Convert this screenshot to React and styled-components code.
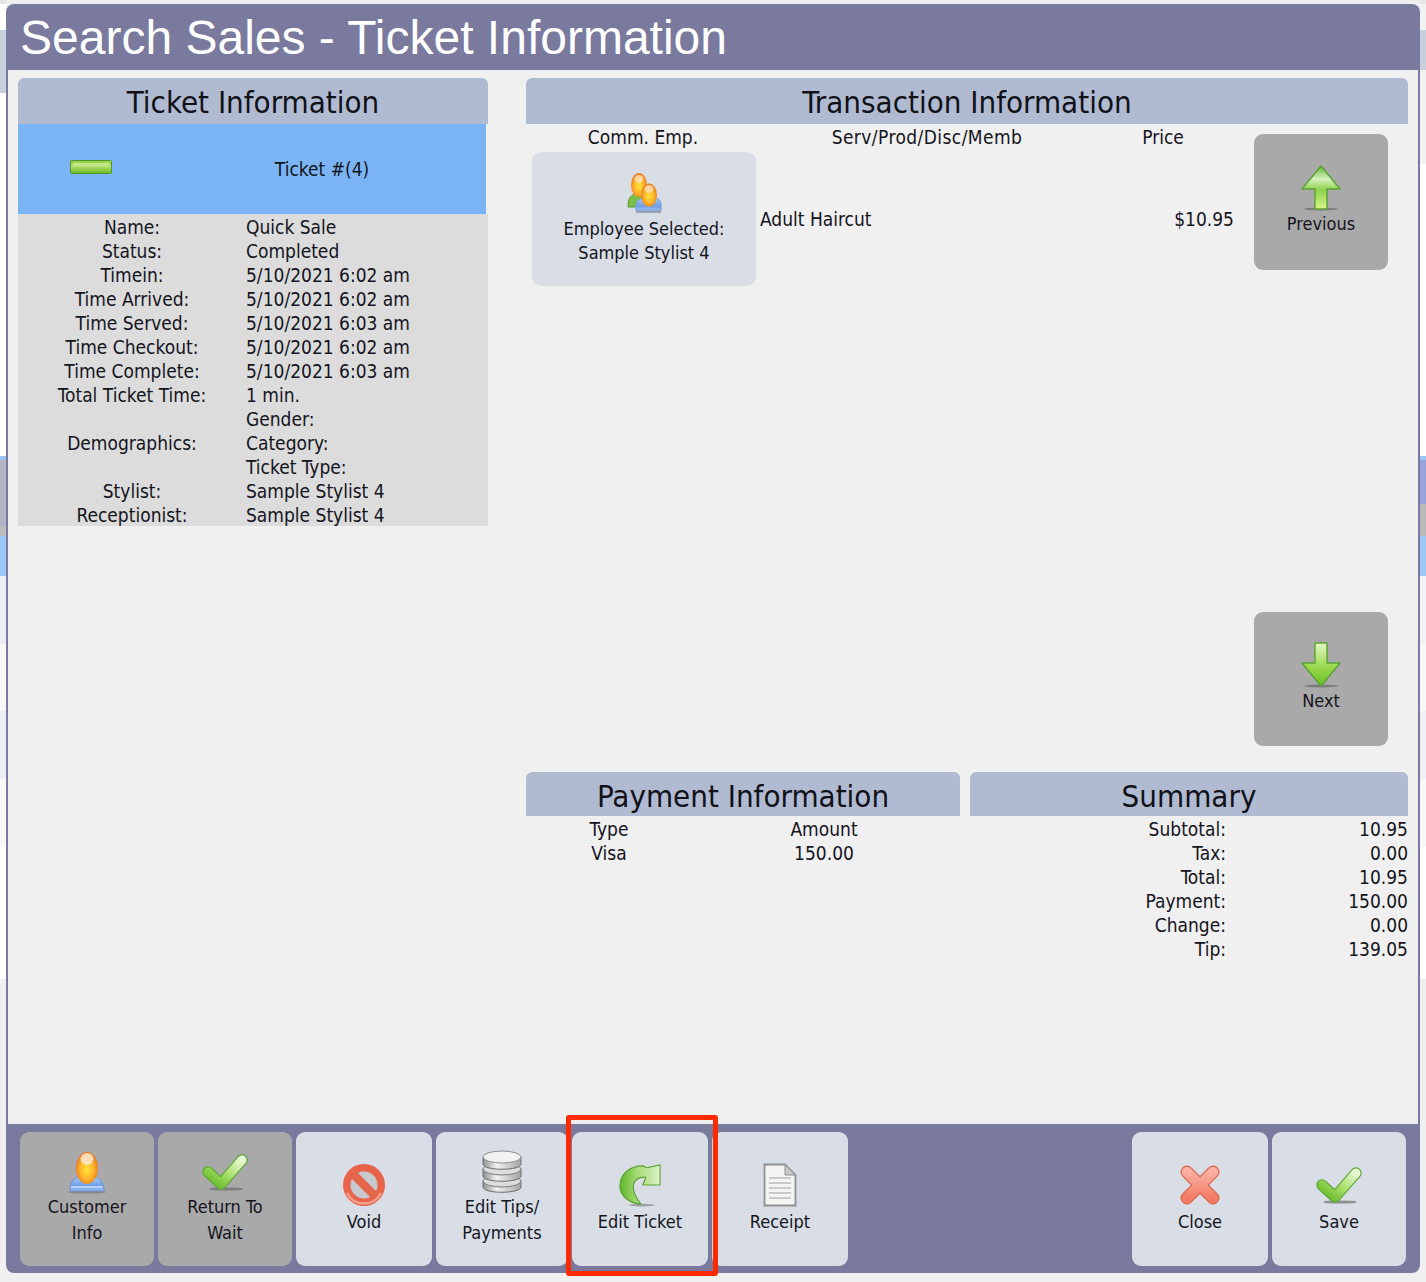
import React from 'react';
import styled, { createGlobalStyle } from 'styled-components';

const GlobalStyle = createGlobalStyle`
  html, body {
    margin: 0;
    padding: 0;
    background: #f0f0f0;
  }
  body {
    font-family: "DejaVu Sans Condensed", "DejaVu Sans", sans-serif;
    color: #14141c;
  }
`;

const Page = styled.div`
  display: grid;
  grid-template-columns: 6px 1414px 6px;
  width: 1426px;
  height: 1282px;
  overflow: hidden;
`;

const Gutter = styled.div`
  display: flex;
  flex-direction: column;
`;

const Stripe = styled.div`
  height: ${(p) => p.$h}px;
  background: ${(p) => p.$c};
`;

const Modal = styled.div`
  display: flex;
  flex-direction: column;
  height: 1269px;
  margin-top: 4px;
  background: #f0f0f0;
`;

const TitleBar = styled.div`
  height: 66px;
  flex: none;
  background: #7a7a9e;
  border-radius: 8px 8px 0 0;
  color: #fff;
  font-family: "Liberation Sans", Arial, sans-serif;
  font-size: 48px;
  line-height: 68px;
  padding-left: 14px;
  white-space: nowrap;
`;

const Body = styled.div`
  flex: 1;
  display: grid;
  grid-template-columns: 470px 882px;
  column-gap: 38px;
  padding: 8px 12px 0 10px;
  border-left: 2px solid #7a7a9e;
  border-right: 2px solid #7a7a9e;
  min-height: 0;
`;

const Column = styled.div`
  display: flex;
  flex-direction: column;
`;

const SectionHead = styled.div`
  height: ${(p) => p.$h || 46}px;
  flex: none;
  background: #b0bbd2;
  border-radius: 6px 6px 0 0;
  text-align: center;
  font-size: 31px;
  line-height: ${(p) => (p.$h ? p.$h + 4 : 48)}px;
  color: #111118;
  white-space: nowrap;
`;

const TicketBanner = styled.div`
  display: grid;
  grid-template-columns: 146px 1fr;
  align-items: center;
  justify-items: center;
  height: 90px;
  margin-right: 2px;
  padding-right: 6px;
  background: #7ab4f5;
  font-size: 19px;
`;

const TicketRows = styled.div`
  display: grid;
  grid-template-columns: 228px 1fr;
  grid-auto-rows: 24px;
  background: #dcdcdc;
  font-size: 19px;
  line-height: 26px;
`;

const RowLabel = styled.div`
  text-align: center;
  white-space: nowrap;
`;

const RowValue = styled.div`
  white-space: nowrap;
`;

const Transaction = styled.div`
  display: flex;
  height: 648px;
  flex: none;
  padding-right: 20px;
`;

const TransactionList = styled.div`
  width: 708px;
  flex: none;
`;

const ListHead = styled.div`
  display: grid;
  grid-template-columns: 234px 334px 138px;
  height: 25px;
  font-size: 19px;
  line-height: 26px;
  text-align: center;
`;

const WideHeadText = styled.span`
  letter-spacing: 0.42px;
`;

const ListItem = styled.div`
  display: grid;
  grid-template-columns: 234px 1fr auto;
  align-items: center;
  margin-top: 3px;
  font-size: 19px;
`;

const NavColumn = styled.div`
  display: flex;
  flex-direction: column;
  justify-content: space-between;
  margin-left: 20px;
  padding: 10px 0 26px;
`;

const TileButton = styled.button`
  display: flex;
  flex-direction: column;
  align-items: center;
  justify-content: center;
  gap: ${(p) => (p.$single ? 2 : 0)}px;
  box-sizing: border-box;
  flex: none;
  width: ${(p) => p.$w || 134}px;
  height: ${(p) => p.$hgt || 134}px;
  margin-left: ${(p) => (p.$push ? 'auto' : '0')};
  padding: ${(p) => (p.$single ? '0' : '0 0 2px')};
  border: none;
  border-radius: 9px;
  background: ${(p) => (p.$dim ? '#a9a9a9' : '#d9dee6')};
  color: #14141c;
  font-family: inherit;
  font-size: 18px;
  line-height: ${(p) => p.$lh || 26}px;
  white-space: nowrap;
`;

const EmployeeButton = styled(TileButton)`
  margin-left: 6px;
`;

const IconGap = styled.span`
  display: block;
  height: 3px;
`;

const Bottom = styled.div`
  display: grid;
  grid-template-columns: 434px 438px;
  column-gap: 10px;
`;

const PayRows = styled.div`
  display: grid;
  grid-template-columns: 166px 264px;
  grid-auto-rows: 24px;
  font-size: 19px;
  line-height: 26px;
  text-align: center;
`;

const SummaryRows = styled.div`
  display: grid;
  grid-template-columns: 256px 1fr;
  grid-auto-rows: 24px;
  font-size: 19px;
  line-height: 26px;
  text-align: right;
`;

const BottomBar = styled.div`
  position: relative;
  display: flex;
  gap: 4px;
  flex: none;
  height: 149px;
  box-sizing: border-box;
  padding: 8px 14px 0;
  background: #7a7a9e;
  border-radius: 0 0 8px 8px;
`;

const Highlight = styled.div`
  position: absolute;
  left: 560px;
  top: -9px;
  width: 152px;
  height: 161px;
  box-sizing: border-box;
  border: 5px solid #ff2a00;
  border-radius: 3px;
  pointer-events: none;
`;

const Glyph = styled.svg`
  display: block;
  flex: none;
`;

const Defs = () => (
  <svg width="0" height="0" style={{ position: 'absolute' }}>
    <defs>
      <linearGradient id="grnV" x1="0" y1="0" x2="0" y2="1">
        <stop offset="0" stopColor="#e4f6c8" />
        <stop offset="0.55" stopColor="#9ada50" />
        <stop offset="1" stopColor="#6cbd24" />
      </linearGradient>
      <linearGradient id="grnCheck" x1="1" y1="0" x2="0" y2="1">
        <stop offset="0" stopColor="#e8f8d4" />
        <stop offset="0.5" stopColor="#a8e06c" />
        <stop offset="1" stopColor="#62b620" />
      </linearGradient>
      <linearGradient id="grnUp" x1="0" y1="0" x2="0" y2="1">
        <stop offset="0" stopColor="#5fb52c" />
        <stop offset="0.3" stopColor="#d8f2c0" />
        <stop offset="0.55" stopColor="#8ed24c" />
        <stop offset="1" stopColor="#d8f48c" />
      </linearGradient>
      <linearGradient id="bar" x1="0" y1="0" x2="0" y2="1">
        <stop offset="0" stopColor="#8fce3c" />
        <stop offset="0.45" stopColor="#b6e070" />
        <stop offset="1" stopColor="#6ab41e" />
      </linearGradient>
      <radialGradient id="head" cx="0.5" cy="0.55" r="0.55">
        <stop offset="0" stopColor="#ffe23a" />
        <stop offset="0.55" stopColor="#ffb52a" />
        <stop offset="1" stopColor="#e8761e" />
      </radialGradient>
      <linearGradient id="shirt" x1="0" y1="0" x2="0" y2="1">
        <stop offset="0" stopColor="#aac8f4" />
        <stop offset="0.6" stopColor="#6f9fe8" />
        <stop offset="1" stopColor="#98bcf0" />
      </linearGradient>
      <linearGradient id="disc" x1="0" y1="0" x2="1" y2="0">
        <stop offset="0" stopColor="#8e8e8e" />
        <stop offset="0.35" stopColor="#f2f2f2" />
        <stop offset="1" stopColor="#a4a4a4" />
      </linearGradient>
      <linearGradient id="salmon" x1="0" y1="0" x2="0" y2="1">
        <stop offset="0" stopColor="#fbb0a0" />
        <stop offset="1" stopColor="#f47c66" />
      </linearGradient>
      <linearGradient id="redo" x1="0" y1="0" x2="1" y2="0">
        <stop offset="0" stopColor="#5fb42a" />
        <stop offset="0.45" stopColor="#a8dc78" />
        <stop offset="1" stopColor="#dcf2c8" />
      </linearGradient>
    </defs>
  </svg>
);

const StatusBar = () => (
  <Glyph width="42" height="14" viewBox="0 0 42 14" style={{ transform: 'translateY(-2px)' }}>
    <rect x="0.5" y="0.5" width="41" height="13" rx="1" fill="url(#bar)" stroke="#4f9a2c" />
    <rect x="3" y="3" width="36" height="3" fill="#c2e88a" />
  </Glyph>
);

const PeopleIcon = () => (
  <Glyph width="36" height="42" viewBox="0 0 36 42">
    <path d="M2 33 q0 -10 8 -11 h8 l4 4 v9 h-20z" fill="#7cc04a" stroke="#5c9c3c" />
    <ellipse cx="13" cy="13" rx="8" ry="12" fill="url(#head)" />
    <ellipse cx="13" cy="7" rx="4.5" ry="4" fill="#ffe3c0" opacity="0.75" />
    <path d="M10 39 v-7 q1 -5 8 -6 h11 q6 1 6 6 v7z" fill="url(#shirt)" stroke="#7c9ad0" />
    <rect x="10" y="39" width="25" height="2" fill="#8a8f9a" opacity="0.7" />
    <ellipse cx="23" cy="23" rx="8" ry="11.5" fill="url(#head)" />
    <ellipse cx="23" cy="17" rx="4.5" ry="4" fill="#ffe3c0" opacity="0.75" />
  </Glyph>
);

const PersonIcon = () => (
  <Glyph width="48" height="44" viewBox="0 0 48 44">
    <ellipse cx="24" cy="42" rx="19" ry="1.6" fill="#777" opacity="0.7" />
    <path d="M7 41 q0 -13 10 -14 h14 q10 1 10 14z" fill="url(#shirt)" stroke="#6f94d4" />
    <path d="M8 37 h32" stroke="#cfe0fa" strokeWidth="1.5" />
    <ellipse cx="24" cy="18" rx="11" ry="16" fill="url(#head)" />
    <ellipse cx="24" cy="9" rx="6.5" ry="6" fill="#ffe9d0" opacity="0.85" />
  </Glyph>
);

const CheckIcon = () => (
  <Glyph width="48" height="44" viewBox="0 -2 48 44">
    <ellipse cx="25" cy="37" rx="17" ry="1.6" fill="#666" opacity="0.65" />
    <path d="M7 20 L20 32 L41 8" fill="none" stroke="#5fa93a" strokeWidth="11.5" strokeLinejoin="round" strokeLinecap="round" />
    <path d="M7 20 L20 32 L41 8" fill="none" stroke="url(#grnCheck)" strokeWidth="9" strokeLinejoin="round" strokeLinecap="round" />
  </Glyph>
);

const VoidIcon = () => (
  <Glyph width="44" height="44" viewBox="0 0 44 44">
    <circle cx="22" cy="22" r="21" fill="#e8634a" />
    <circle cx="22" cy="22" r="13.5" fill="#c6c9ce" />
    <path d="M11 11 L33 33" stroke="#e2654c" strokeWidth="8.5" />
    <path d="M5 30 A19 19 0 0 0 39 30" fill="none" stroke="#f4a08c" strokeWidth="2.5" />
  </Glyph>
);

const DatabaseIcon = () => (
  <Glyph width="40" height="44" viewBox="0 0 40 44">
    <path d="M1 31 v6 c0 7 38 7 38 0 v-6z" fill="url(#disc)" stroke="#6e6e6e" />
    <ellipse cx="20" cy="31" rx="19" ry="6" fill="#dcdcdc" stroke="#7c7c7c" />
    <path d="M1 19 v7 c0 7 38 7 38 0 v-7z" fill="url(#disc)" stroke="#6e6e6e" />
    <ellipse cx="20" cy="19" rx="19" ry="6" fill="#dcdcdc" stroke="#7c7c7c" />
    <path d="M1 7 v7 c0 7 38 7 38 0 v-7z" fill="url(#disc)" stroke="#6e6e6e" />
    <ellipse cx="20" cy="7" rx="19" ry="6" fill="#f2f2f2" stroke="#8c8c8c" />
  </Glyph>
);

const RedoIcon = () => (
  <Glyph width="48" height="44" viewBox="0 0 48 46">
    <ellipse cx="26" cy="44" rx="14" ry="1.4" fill="#777" opacity="0.6" />
    <path
      d="M25 43 C12 42 3 34 3 24 C3 11 14 3 27 3 L31 5 L45 2 L45 23 L27 23 L30 15 C23 14 17 18 17 25 C17 32 21 38 25 43z"
      fill="url(#redo)"
      stroke="#5aa232"
      strokeWidth="1.2"
      strokeLinejoin="round"
    />
  </Glyph>
);

const DocIcon = () => (
  <Glyph width="34" height="44" viewBox="0 0 34 44">
    <path d="M1.5 1.5 H22 L32.5 12 V42.5 H1.5z" fill="#f4f4f4" stroke="#8f8f8f" strokeWidth="1.8" />
    <path d="M22 1.5 V12 H32.5z" fill="#c8c8c8" stroke="#8f8f8f" />
    <path d="M6 15 H28 M6 20 H28 M6 25 H28 M6 30 H28 M6 35 H28" stroke="#bcbcbc" strokeWidth="1.5" />
  </Glyph>
);

const CloseIcon = () => (
  <Glyph width="44" height="44" viewBox="-1 -1 44 44">
    <path d="M8 8 L34 34 M34 8 L8 34" stroke="#d9654f" strokeWidth="13" strokeLinecap="round" />
    <path d="M8 8 L34 34 M34 8 L8 34" stroke="url(#salmon)" strokeWidth="10.5" strokeLinecap="round" />
  </Glyph>
);

const ArrowIcon = ({ down }) => (
  <Glyph width="42" height="46" viewBox="0 0 42 46">
    <ellipse cx="21" cy="44" rx="17" ry="1.5" fill="#666" opacity="0.65" />
    <path
      d={down
        ? 'M15 1 H27 V21 H40 L21 44 L2 21 H15z'
        : 'M21 1 L40 24 H27 V44 H15 V24 H2z'}
      fill={down ? 'url(#grnV)' : 'url(#grnUp)'}
      stroke="#5aa232"
      strokeWidth="1.4"
      strokeLinejoin="round"
    />
  </Glyph>
);

const leftStripes = [
  [4, '#e6e6e6'], [26, '#ffffff'], [63, '#c8d0de'], [363, '#ffffff'], [4, '#9ac4f4'],
  [66, '#b4b4c4'], [10, '#bdbdbd'], [40, '#9cc6f6'], [68, '#eeeef5'], [67, '#f8f8f8'],
  [68, '#eeeef5'], [68, '#f8f8f8'], [132, '#ffffff'], [323, '#f0f0f0'],
];

const rightStripes = [
  [4, '#e6e6e6'], [26, '#f2f2f2'], [40, '#c8d0de'], [94, '#f2f2f2'], [292, '#ffffff'], [4, '#9ac4f4'],
  [44, '#9aa4dc'], [32, '#b8b8b8'], [40, '#9cc6f6'], [68, '#f4f4f8'], [67, '#f8f8f8'],
  [68, '#f0f0f6'], [68, '#f8f8f8'], [132, '#ffffff'], [323, '#f0f0f0'],
];

const ticketRows = [
  ['Name:', 'Quick Sale'],
  ['Status:', 'Completed'],
  ['Timein:', '5/10/2021 6:02 am'],
  ['Time Arrived:', '5/10/2021 6:02 am'],
  ['Time Served:', '5/10/2021 6:03 am'],
  ['Time Checkout:', '5/10/2021 6:02 am'],
  ['Time Complete:', '5/10/2021 6:03 am'],
  ['Total Ticket Time:', '1 min.'],
  ['', 'Gender:'],
  ['Demographics:', 'Category:'],
  ['', 'Ticket Type:'],
  ['Stylist:', 'Sample Stylist 4'],
  ['Receptionist:', 'Sample Stylist 4'],
];

const summaryRows = [
  ['Subtotal:', '10.95'],
  ['Tax:', '0.00'],
  ['Total:', '10.95'],
  ['Payment:', '150.00'],
  ['Change:', '0.00'],
  ['Tip:', '139.05'],
];

export default function App() {
  return (
    <Page>
      <GlobalStyle />
      <Defs />
      <Gutter>
        {leftStripes.map(([h, c], i) => <Stripe key={i} $h={h} $c={c} />)}
      </Gutter>
      <Modal>
        <TitleBar>Search Sales - Ticket Information</TitleBar>
        <Body>
          <Column>
            <SectionHead>Ticket Information</SectionHead>
            <TicketBanner>
              <StatusBar />
              <span>Ticket #(4)</span>
            </TicketBanner>
            <TicketRows>
              {ticketRows.map(([label, value]) => (
                <React.Fragment key={value + label}>
                  <RowLabel>{label}</RowLabel>
                  <RowValue>{value}</RowValue>
                </React.Fragment>
              ))}
            </TicketRows>
          </Column>
          <Column>
            <SectionHead>Transaction Information</SectionHead>
            <Transaction>
              <TransactionList>
                <ListHead>
                  <span>Comm. Emp.</span>
                  <WideHeadText>Serv/Prod/Disc/Memb</WideHeadText>
                  <span>Price</span>
                </ListHead>
                <ListItem>
                  <EmployeeButton $w={224} $lh={24}>
                    <PeopleIcon />
                    <IconGap />
                    <span>Employee Selected:</span>
                    <span>Sample Stylist 4</span>
                  </EmployeeButton>
                  <span>Adult Haircut</span>
                  <span>$10.95</span>
                </ListItem>
              </TransactionList>
              <NavColumn>
                <TileButton $dim $hgt={136}>
                  <ArrowIcon />
                  Previous
                </TileButton>
                <TileButton $dim>
                  <ArrowIcon down />
                  Next
                </TileButton>
              </NavColumn>
            </Transaction>
            <Bottom>
              <div>
                <SectionHead $h={44}>Payment Information</SectionHead>
                <PayRows>
                  <span>Type</span>
                  <span>Amount</span>
                  <span>Visa</span>
                  <span>150.00</span>
                </PayRows>
              </div>
              <div>
                <SectionHead $h={44}>Summary</SectionHead>
                <SummaryRows>
                  {summaryRows.map(([label, value]) => (
                    <React.Fragment key={label}>
                      <span>{label}</span>
                      <span>{value}</span>
                    </React.Fragment>
                  ))}
                </SummaryRows>
              </div>
            </Bottom>
          </Column>
        </Body>
        <BottomBar>
          <TileButton $dim>
            <PersonIcon />
            <span>Customer</span>
            <span>Info</span>
          </TileButton>
          <TileButton $dim>
            <CheckIcon />
            <span>Return To</span>
            <span>Wait</span>
          </TileButton>
          <TileButton $w={136} $single>
            <VoidIcon />
            Void
          </TileButton>
          <TileButton $w={132}>
            <DatabaseIcon />
            <span>Edit Tips/</span>
            <span>Payments</span>
          </TileButton>
          <TileButton $w={136} $single>
            <RedoIcon />
            Edit Ticket
          </TileButton>
          <TileButton $w={136} $single>
            <DocIcon />
            Receipt
          </TileButton>
          <TileButton $w={136} $push $single>
            <CloseIcon />
            Close
          </TileButton>
          <TileButton $single>
            <CheckIcon />
            Save
          </TileButton>
          <Highlight />
        </BottomBar>
      </Modal>
      <Gutter>
        {rightStripes.map(([h, c], i) => <Stripe key={i} $h={h} $c={c} />)}
      </Gutter>
    </Page>
  );
}
